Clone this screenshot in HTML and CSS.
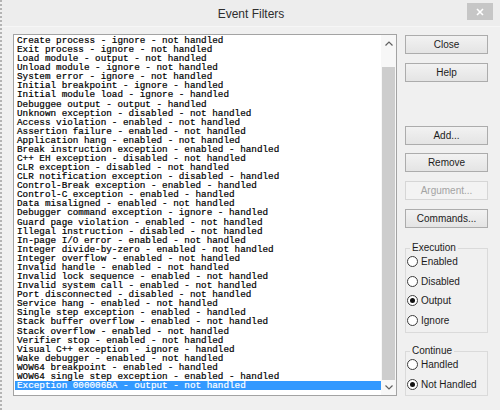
FILE: index.html
```html
<!DOCTYPE html>
<html>
<head>
<meta charset="utf-8">
<title>Event Filters</title>
<link rel="stylesheet" href="styles.css">
</head>
<body>
<div class="window">
  <div class="titlebar">
    <span class="title">Event Filters</span>
    <span class="close-x">
      <svg width="8" height="8" viewBox="0 0 8 8"><path d="M1 1L7 7M7 1L1 7" stroke="#fff" stroke-width="1.6" fill="none"/></svg>
    </span>
  </div>
  <div class="content">
    <div class="listbox">
      <div class="items">
        <div class="item">Create process - ignore - not handled</div>
        <div class="item">Exit process - ignore - not handled</div>
        <div class="item">Load module - output - not handled</div>
        <div class="item">Unload module - ignore - not handled</div>
        <div class="item">System error - ignore - not handled</div>
        <div class="item">Initial breakpoint - ignore - handled</div>
        <div class="item">Initial module load - ignore - handled</div>
        <div class="item">Debuggee output - output - handled</div>
        <div class="item">Unknown exception - disabled - not handled</div>
        <div class="item">Access violation - enabled - not handled</div>
        <div class="item">Assertion failure - enabled - not handled</div>
        <div class="item">Application hang - enabled - not handled</div>
        <div class="item">Break instruction exception - enabled - handled</div>
        <div class="item">C++ EH exception - disabled - not handled</div>
        <div class="item">CLR exception - disabled - not handled</div>
        <div class="item">CLR notification exception - disabled - handled</div>
        <div class="item">Control-Break exception - enabled - handled</div>
        <div class="item">Control-C exception - enabled - handled</div>
        <div class="item">Data misaligned - enabled - not handled</div>
        <div class="item">Debugger command exception - ignore - handled</div>
        <div class="item">Guard page violation - enabled - not handled</div>
        <div class="item">Illegal instruction - disabled - not handled</div>
        <div class="item">In-page I/O error - enabled - not handled</div>
        <div class="item">Integer divide-by-zero - enabled - not handled</div>
        <div class="item">Integer overflow - enabled - not handled</div>
        <div class="item">Invalid handle - enabled - not handled</div>
        <div class="item">Invalid lock sequence - enabled - not handled</div>
        <div class="item">Invalid system call - enabled - not handled</div>
        <div class="item">Port disconnected - disabled - not handled</div>
        <div class="item">Service hang - enabled - not handled</div>
        <div class="item">Single step exception - enabled - handled</div>
        <div class="item">Stack buffer overflow - enabled - not handled</div>
        <div class="item">Stack overflow - enabled - not handled</div>
        <div class="item">Verifier stop - enabled - not handled</div>
        <div class="item">Visual C++ exception - ignore - handled</div>
        <div class="item">Wake debugger - enabled - not handled</div>
        <div class="item">WOW64 breakpoint - enabled - handled</div>
        <div class="item">WOW64 single step exception - enabled - handled</div>
        <div class="item selected">Exception 000006BA - output - not handled</div>
      </div>
      <div class="scrollbar">
        <div class="arrow arrow-up">
          <svg width="8" height="5" viewBox="0 0 8 5"><path d="M0.5 4.5L4 1L7.5 4.5" stroke="#606060" stroke-width="1.2" fill="none"/></svg>
        </div>
        <div class="track">
          <div class="thumb"></div>
        </div>
        <div class="arrow arrow-down">
          <svg width="8" height="5" viewBox="0 0 8 5"><path d="M0.5 0.5L4 4L7.5 0.5" stroke="#606060" stroke-width="1.2" fill="none"/></svg>
        </div>
      </div>
    </div>
    <div class="side">
      <div class="btn btn-close">Close</div>
      <div class="btn btn-help">Help</div>
      <div class="btn btn-add">Add...</div>
      <div class="btn btn-remove">Remove</div>
      <div class="btn btn-arg disabled">Argument...</div>
      <div class="btn btn-cmd">Commands...</div>
      <fieldset class="group group-exec">
        <legend>Execution</legend>
        <div class="opt first"><span class="radio"></span><span class="lbl">Enabled</span></div>
        <div class="opt"><span class="radio"></span><span class="lbl">Disabled</span></div>
        <div class="opt"><span class="radio checked"></span><span class="lbl">Output</span></div>
        <div class="opt"><span class="radio"></span><span class="lbl">Ignore</span></div>
      </fieldset>
      <fieldset class="group group-cont">
        <legend>Continue</legend>
        <div class="opt first"><span class="radio"></span><span class="lbl">Handled</span></div>
        <div class="opt"><span class="radio checked"></span><span class="lbl">Not Handled</span></div>
      </fieldset>
    </div>
  </div>
</div>
</body>
</html>
```
FILE: styles.css
```css
html, body {
  margin: 0;
  padding: 0;
  background: #f0f0f0;
}

body {
  font-family: "Liberation Sans", Arial, sans-serif;
}

.window {
  width: 500px;
  height: 410px;
  box-sizing: border-box;
  border-left: 2px dotted #b4b4b4;
  background: #f0f0f0;
  display: flex;
  flex-direction: column;
  overflow: hidden;
}

.titlebar {
  height: 27px;
  flex: none;
  display: flex;
  align-items: center;
  justify-content: center;
  position: relative;
  background: #ededed;
  border-bottom: 1px solid #f6f6f6;
  box-sizing: border-box;
}

.title {
  font-size: 12px;
  color: #2e2e2e;
  margin-top: 1px;
}

.close-x {
  position: absolute;
  right: 7px;
  top: 3px;
  width: 26px;
  height: 17px;
  background: #c6c6c6;
  display: flex;
  align-items: center;
  justify-content: center;
}

.content {
  display: flex;
  align-items: flex-start;
  gap: 8px;
  padding: 7px 0 0 11px;
}

.listbox {
  width: 384px;
  height: 362px;
  box-sizing: border-box;
  border: 1px solid #a3a3a3;
  background: #ffffff;
  display: flex;
  flex: none;
}

.items {
  flex: 1;
  padding: 1px 0 0 1px;
  font-family: "Liberation Mono", "Courier New", monospace;
  font-size: 9.3px;
  line-height: 9.08px;
  color: #000;
  -webkit-text-stroke: 0.2px #000;
  overflow: hidden;
}

.item {
  padding-left: 2px;
  height: 9.08px;
  white-space: pre;
}

.item.selected {
  background: #3399ff;
  color: #ffffff;
  -webkit-text-stroke: 0.2px #ffffff;
}

.scrollbar {
  width: 15px;
  flex: none;
  display: flex;
  flex-direction: column;
  background: #f7f7f7;
}

.arrow {
  display: flex;
  align-items: center;
  justify-content: center;
}

.arrow-up {
  height: 17px;
}

.arrow-down {
  height: 15px;
}

.track {
  flex: 1;
  display: flex;
  flex-direction: column;
  padding-top: 15px;
}

.thumb {
  flex: 1;
  margin: 0 1px 0 1px;
  background: #cdcdcd;
}

.side {
  width: 83px;
  flex: none;
  display: flex;
  flex-direction: column;
  margin-top: 1px;
}

.btn {
  height: 19px;
  box-sizing: border-box;
  border: 1px solid #acacac;
  background: linear-gradient(#f2f2f2, #e4e4e4);
  font-size: 10px;
  color: #1c1c1c;
  display: flex;
  align-items: center;
  justify-content: center;
}

.btn-help,
.btn-arg,
.btn-cmd {
  margin-top: 9px;
}

.btn-add {
  margin-top: 44px;
}

.btn-remove {
  margin-top: 8px;
}

.btn.disabled {
  color: #a3a3a3;
  border-color: #d6d6d6;
  background: #f3f3f3;
}

.group {
  margin: 0;
  padding: 0 0 2px 1px;
  border: 1px solid #dadada;
  min-width: 0;
}

.group legend {
  font-size: 10px;
  line-height: 10px;
  color: #1c1c1c;
  padding: 0 2px;
  margin-left: 3px;
}

.group-exec {
  margin-top: 15px;
}

.group-cont {
  margin-top: 13px;
  padding-bottom: 1px;
}

.opt {
  height: 19.5px;
  display: flex;
  align-items: center;
  gap: 3px;
}

.opt.first {
  margin-top: -1px;
}

.radio {
  width: 11px;
  height: 11px;
  box-sizing: border-box;
  border: 1px solid #3c3c3c;
  border-radius: 50%;
  background: #ffffff;
  display: flex;
  align-items: center;
  justify-content: center;
  flex: none;
}

.radio.checked::after {
  content: "";
  width: 5px;
  height: 5px;
  border-radius: 50%;
  background: #111;
}

.lbl {
  font-size: 10px;
  color: #1c1c1c;
}
```
